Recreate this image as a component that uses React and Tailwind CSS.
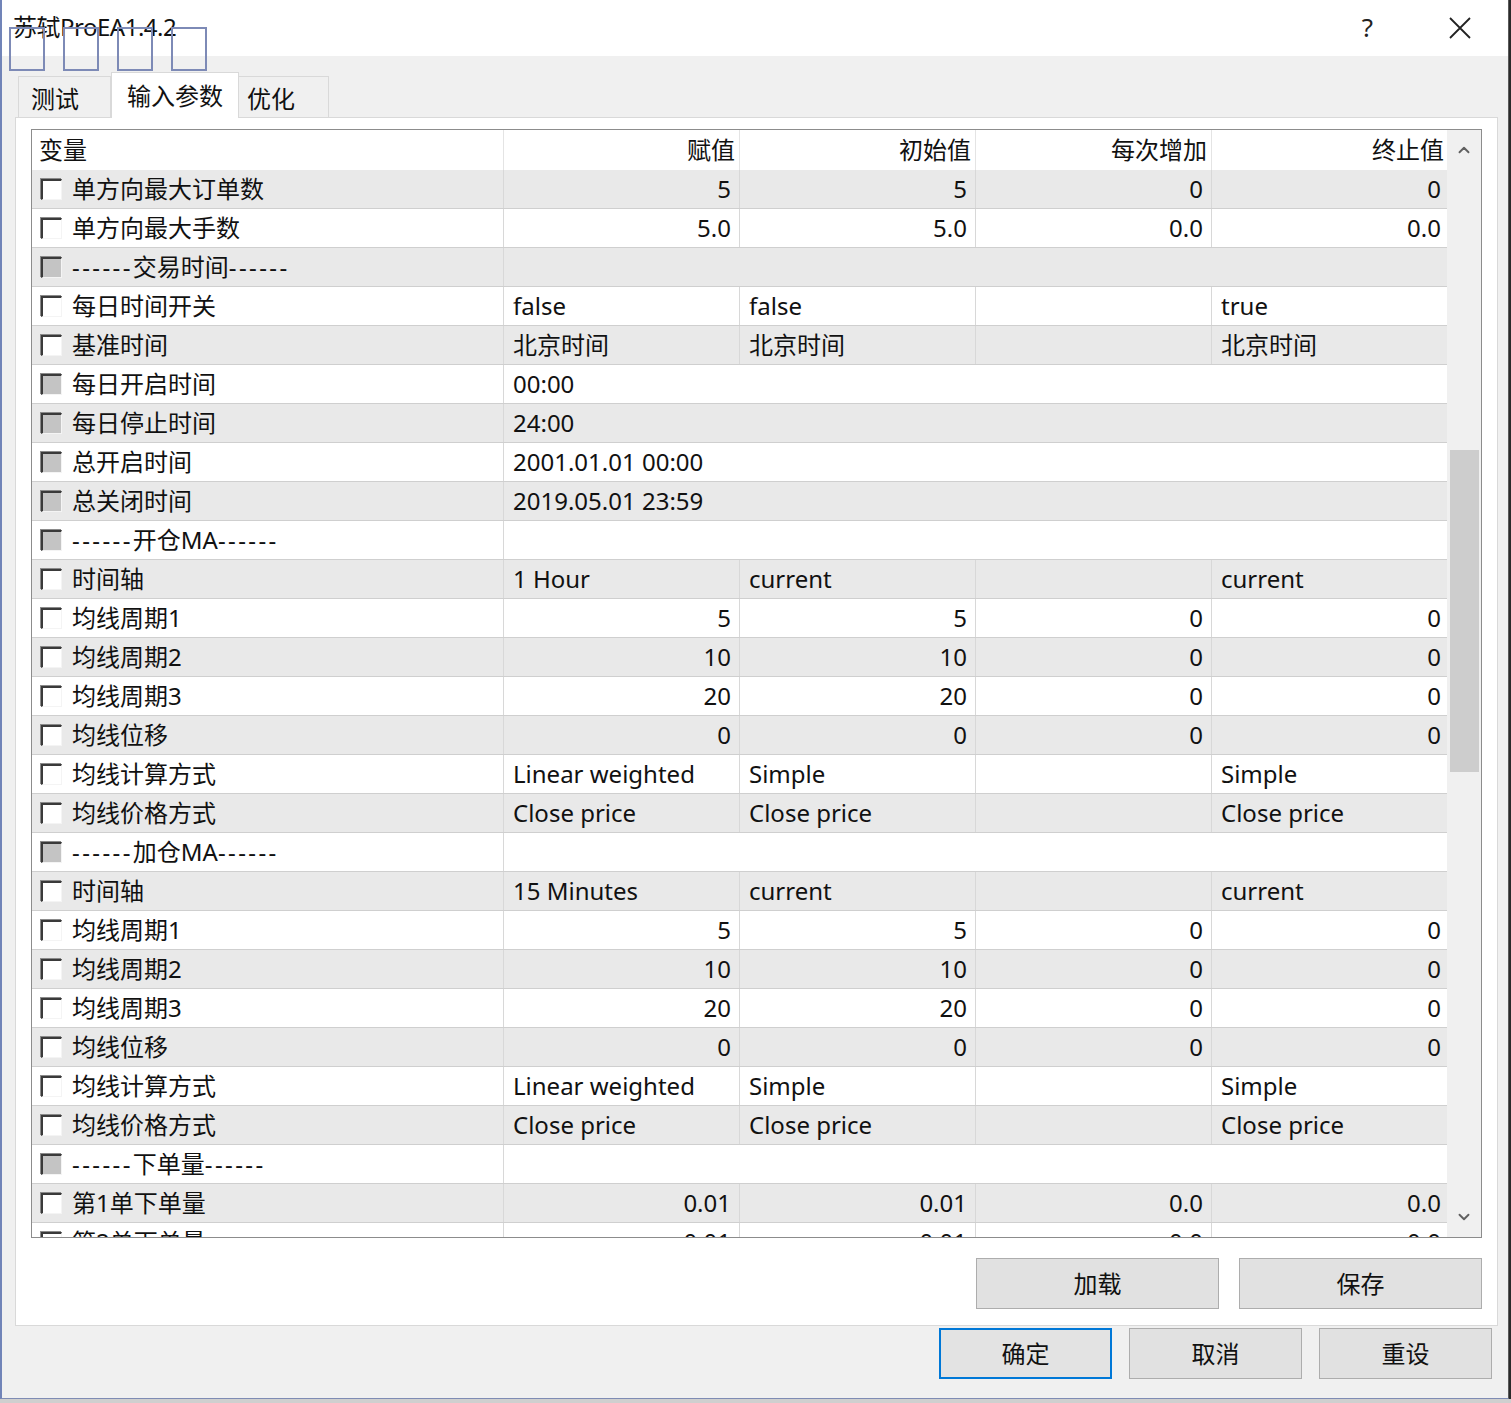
import { ChevronUp, ChevronDown } from "lucide-react"

const rows = [
  { name: "单方向最大订单数", v: ["5", "5", "0", "0"], num: true },
  { name: "单方向最大手数", v: ["5.0", "5.0", "0.0", "0.0"], num: true },
  { name: "交易时间", section: true, merged: "", dim: true },
  { name: "每日时间开关", v: ["false", "false", "", "true"] },
  { name: "基准时间", v: ["北京时间", "北京时间", "", "北京时间"] },
  { name: "每日开启时间", merged: "00:00", dim: true },
  { name: "每日停止时间", merged: "24:00", dim: true },
  { name: "总开启时间", merged: "2001.01.01 00:00", dim: true },
  { name: "总关闭时间", merged: "2019.05.01 23:59", dim: true },
  { name: "开仓MA", section: true, merged: "", dim: true },
  { name: "时间轴", v: ["1 Hour", "current", "", "current"] },
  { name: "均线周期1", v: ["5", "5", "0", "0"], num: true },
  { name: "均线周期2", v: ["10", "10", "0", "0"], num: true },
  { name: "均线周期3", v: ["20", "20", "0", "0"], num: true },
  { name: "均线位移", v: ["0", "0", "0", "0"], num: true },
  { name: "均线计算方式", v: ["Linear weighted", "Simple", "", "Simple"] },
  { name: "均线价格方式", v: ["Close price", "Close price", "", "Close price"] },
  { name: "加仓MA", section: true, merged: "", dim: true },
  { name: "时间轴", v: ["15 Minutes", "current", "", "current"] },
  { name: "均线周期1", v: ["5", "5", "0", "0"], num: true },
  { name: "均线周期2", v: ["10", "10", "0", "0"], num: true },
  { name: "均线周期3", v: ["20", "20", "0", "0"], num: true },
  { name: "均线位移", v: ["0", "0", "0", "0"], num: true },
  { name: "均线计算方式", v: ["Linear weighted", "Simple", "", "Simple"] },
  { name: "均线价格方式", v: ["Close price", "Close price", "", "Close price"] },
  { name: "下单量", section: true, merged: "", dim: true },
  { name: "第1单下单量", v: ["0.01", "0.01", "0.0", "0.0"], num: true },
  { name: "第2单下单量", v: ["0.01", "0.01", "0.0", "0.0"], num: true },
]

function CheckBox({ dim }) {
  return (
    <span
      className={
        "block w-[21px] h-[21px] shrink-0 border-t-2 border-l-2 border-r border-b border-t-[#3a3a3a] border-l-[#3a3a3a] border-r-[#f4f4f4] border-b-[#f4f4f4] shadow-[-1px_-1px_0_#8a8a8a] " +
        (dim ? "bg-[#c4c4c4]" : "bg-white")
      }
    ></span>
  )
}

function Label({ row }) {
  if (!row.section) return <span className="whitespace-nowrap">{row.name}</span>
  return (
    <span className="whitespace-nowrap">
      <span className="tracking-[2.4px]">------</span>
      {row.name}
      <span className="tracking-[2.4px]">------</span>
    </span>
  )
}

function Row({ row, idx }) {
  const bg = idx % 2 === 0 ? "bg-[#e9e9e9]" : "bg-white"
  return (
    <div className={"grid grid-cols-[472px_236px_236px_236px_237px] h-[39px] shrink-0 border-b border-[#cfcfcf] " + bg}>
      <div className="flex items-center gap-[10px] pl-[9px] border-r border-[#d8d8d8]">
        <CheckBox dim={row.dim} />
        <Label row={row} />
      </div>
      {row.merged !== undefined ? (
        <div className="col-span-4 flex items-center pl-[9px]">{row.merged}</div>
      ) : (
        row.v.map((val, i) => (
          <div
            key={i}
            className={
              "flex items-center border-r border-[#d8d8d8] last:border-r-0 " +
              (row.num ? "justify-end pr-[8px]" : "pl-[9px]")
            }
          >
            {val}
          </div>
        ))
      )}
    </div>
  )
}

function Btn({ children, className, primary }) {
  return (
    <button
      className={
        "flex items-center justify-center h-[51px] text-[24px] text-[#111] " +
        (primary ? "border-2 border-[#0078d7] bg-[#e3e3e3] " : "border border-[#adadad] bg-[#e1e1e1] ") +
        (className || "")
      }
    >
      {children}
    </button>
  )
}

export default function App() {
  return (
    <div className="relative w-[1511px] h-[1403px] bg-[#cfcfcf] overflow-hidden font-['Noto_Sans','Noto_Sans_CJK_SC',sans-serif] text-[24px] leading-none text-[#111]">
      <div className="flex h-[1399px]">
        {/* window */}
        <div className="flex flex-col w-[1509px] h-full border-l-2 border-b border-r border-l-[#7184b8] border-b-[#7f8cb4] border-r-[#5a5a5a] bg-[#f0f0f0]">
          {/* title bar */}
          <div className="relative flex items-center h-[56px] shrink-0 bg-white">
            <span className="pl-[11px] pb-[2px] text-[24px] tracking-[-0.5px]">苏轼ProEA1.4.2</span>
            <span className="ml-auto mr-[76px] pb-[3px] text-[26px] text-[#222]">?</span>
            <svg className="mr-[37px]" width="22" height="22" viewBox="0 0 22 22" fill="none" stroke="#222" strokeWidth="1.8">
              <path d="M1 1 L21 21 M21 1 L1 21" />
            </svg>
            <div className="absolute left-[7px] top-[27px] flex gap-[18px]">
              <span className="block w-[36px] h-[44px] border-2 border-[#7d8ab6]"></span>
              <span className="block w-[36px] h-[44px] border-2 border-[#7d8ab6]"></span>
              <span className="block w-[36px] h-[44px] border-2 border-[#7d8ab6]"></span>
              <span className="block w-[36px] h-[44px] border-2 border-[#7d8ab6]"></span>
            </div>
          </div>

          {/* tabs */}
          <div className="flex items-end h-[61px] pl-[16px] shrink-0">
            <div className="flex items-center h-[41px] w-[93px] pl-[12px] pt-[4px] border border-b-0 border-[#d9d9d9] bg-[#f0f0f0]">测试</div>
            <div className="relative z-10 flex items-center h-[46px] w-[128px] pl-[15px] -mb-px bg-white border border-b-0 border-[#d9d9d9]">输入参数</div>
            <div className="flex items-center h-[41px] w-[90px] pl-[8px] pt-[4px] border border-b-0 border-l-0 border-[#d9d9d9] bg-[#f0f0f0]">优化</div>
          </div>

          {/* panel */}
          <div className="flex flex-col ml-[13px] mr-[10px] h-[1209px] bg-white border border-[#d9d9d9] pt-[11px] px-[15px]">
            <div className="flex h-[1109px] shrink-0 border border-[#8c8c8c] overflow-hidden">
              <div className="w-[1417px] flex flex-col overflow-hidden">
                {/* header */}
                <div className="grid grid-cols-[472px_236px_236px_236px_237px] h-[40px] shrink-0 bg-white">
                  <div className="flex items-center pl-[7px] border-r border-[#e4e4e4]">变量</div>
                  <div className="flex items-center justify-end pr-[4px] border-r border-[#e4e4e4]">赋值</div>
                  <div className="flex items-center justify-end pr-[4px] border-r border-[#e4e4e4]">初始值</div>
                  <div className="flex items-center justify-end pr-[4px] border-r border-[#e4e4e4]">每次增加</div>
                  <div className="flex items-center justify-end pr-[5px]">终止值</div>
                </div>
                {rows.map((r, i) => (
                  <Row key={i} row={r} idx={i} />
                ))}
              </div>
              {/* scrollbar */}
              <div className="flex flex-col items-center w-[34px] bg-[#f0f0f0]">
                <div className="flex items-center justify-center h-[40px] w-full">
                  <ChevronUp size={18} strokeWidth={2.5} color="#606060" />
                </div>
                <div className="h-[280px]"></div>
                <div className="w-[29px] h-[322px] bg-[#cdcdcd]"></div>
                <div className="flex-1"></div>
                <div className="flex items-center justify-center h-[40px] w-full">
                  <ChevronDown size={18} strokeWidth={2.5} color="#606060" />
                </div>
              </div>
            </div>
            <div className="flex justify-end gap-[20px] mt-[20px]">
              <Btn className="w-[243px]">加载</Btn>
              <Btn className="w-[243px]">保存</Btn>
            </div>
          </div>

          {/* bottom buttons */}
          <div className="flex justify-end gap-[17px] mt-[2px] mr-[16px]">
            <Btn primary className="w-[173px]">确定</Btn>
            <Btn className="w-[173px]">取消</Btn>
            <Btn className="w-[173px]">重设</Btn>
          </div>
        </div>
        <div className="w-[2px] h-full bg-[#2a2a2a]"></div>
      </div>
    </div>
  )
}
